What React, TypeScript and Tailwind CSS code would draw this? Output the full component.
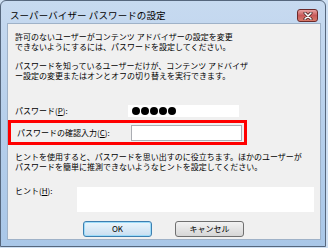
import React from 'react';

const font = { fontFamily: '"Noto Sans CJK JP", "Noto Sans", sans-serif' };

function CloseButton() {
  return (
    <div className="w-[21px] h-[13px] mt-[8px] rounded-[3px] border border-[#6b2a2a] bg-gradient-to-b from-[#e8a3a3] via-[#c85a5a] to-[#d87a6a] flex items-center justify-center">
      <svg width="10" height="8" viewBox="0 0 10 8">
        <path d="M2 1 L8 7 M8 1 L2 7" stroke="#3a1a1a" strokeWidth="3" strokeLinecap="round" />
        <path d="M2 1 L8 7 M8 1 L2 7" stroke="#ffffff" strokeWidth="1.6" strokeLinecap="round" />
      </svg>
    </div>
  );
}

export default function App() {
  return (
    <div className="w-[328px] h-[248px] bg-[#cfe0f3]" style={font}>
      <div className="w-[326px] h-[247px] rounded-t-[6px] border border-[#56677d] bg-gradient-to-b from-[#c7daf0] via-[#b6cfeb] to-[#a9c7e8] flex flex-col">
        {/* title bar */}
        <div className="h-[22px] flex items-start pl-[9px] pr-[7px] shrink-0">
          <span className="text-[9.5px] leading-[10px] mt-[9px] text-black tracking-[0.1px]">
            スーパーバイザー パスワードの設定
          </span>
          <div className="flex-1" />
          <CloseButton />
        </div>

        {/* client area */}
        <div className="ml-[6px] w-[314px] h-[217px] bg-[#f0f0f0] border border-[#9fb2c8] flex flex-col text-[8px] leading-[10px] text-black">
          <p className="ml-[7px] mt-[8px]">
            許可のないユーザーがコンテンツ アドバイザーの設定を変更
            <br />
            できないようにするには、パスワードを設定してください。
          </p>
          <p className="ml-[7px] mt-[9px]">
            パスワードを知っているユーザーだけが、コンテンツ アドバイザ
            <br />
            ー設定の変更またはオンとオフの切り替えを実行できます。
          </p>

          <div className="ml-[7px] mt-[24px] flex items-center h-[12px]">
            <span className="w-[113px] shrink-0">パスワード(<span className="underline">P</span>):</span>
            <div className="w-[111px] h-[12px] bg-white flex items-center pl-[4px] gap-[1px]">
              <div className="w-[8px] h-[8px] rounded-full bg-black" />
              <div className="w-[8px] h-[8px] rounded-full bg-black" />
              <div className="w-[8px] h-[8px] rounded-full bg-black" />
              <div className="w-[8px] h-[8px] rounded-full bg-black" />
              <div className="w-[8px] h-[8px] rounded-full bg-black" />
            </div>
          </div>

          <div className="w-[239px] h-[25px] mt-[3px] border-[3px] border-[#ff0000] flex items-center pl-[6px]">
            <span className="w-[114px] shrink-0">パスワードの確認入力(<span className="underline">C</span>):</span>
            <div className="w-[111px] h-[16px] bg-white border border-[#abadb3]" />
          </div>

          <p className="ml-[7px] mt-[7px]">
            ヒントを使用すると、パスワードを思い出すのに役立ちます。ほかのユーザーが
            <br />
            パスワードを簡単に推測できないようなヒントを設定してください。
          </p>

          <div className="ml-[7px] mt-[15px] flex items-start">
            <span className="w-[62px] shrink-0 mt-[-1px]">ヒント(<span className="underline">H</span>):</span>
            <div className="w-[237px] h-[25px] bg-white" />
          </div>

          <div className="ml-[75px] mt-[9px] flex gap-[23px]">
            <button className="w-[69px] h-[16px] rounded-[3px] border border-[#3c7fb1] bg-gradient-to-b from-[#eaf6fd] to-[#c9def0] text-[8px] leading-none shadow-[inset_0_0_0_1px_#9ddcf9]">
              OK
            </button>
            <button className="w-[69px] h-[16px] rounded-[3px] border border-[#707070] bg-gradient-to-b from-[#f2f2f2] to-[#d6d6d6] text-[8px] leading-none">
              キャンセル
            </button>
          </div>
        </div>
      </div>
    </div>
  );
}
